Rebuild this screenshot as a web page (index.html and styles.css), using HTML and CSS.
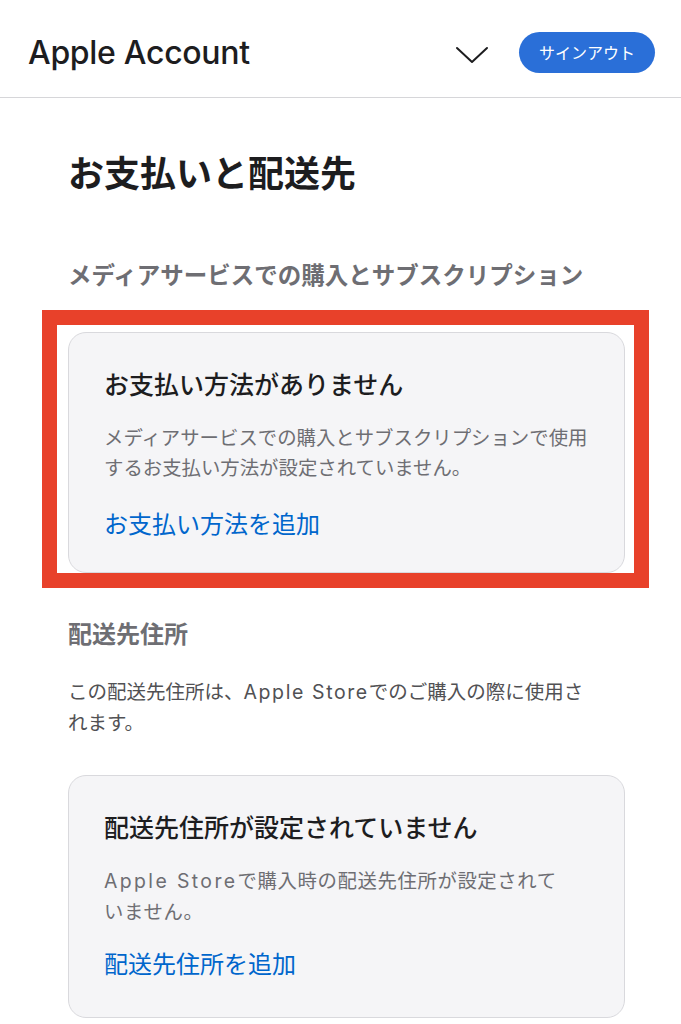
FILE: index.html
```html
<!DOCTYPE html>
<html lang="ja">
<head>
<meta charset="utf-8">
<title>Apple Account</title>
<link rel="stylesheet" href="styles.css">
</head>
<body>
<header class="topbar">
  <div class="brand">Apple Account</div>
  <div class="actions">
    <svg class="chevron" width="34" height="20" viewBox="0 0 34 20" aria-hidden="true">
      <path d="M2 3 L17 17 L32 3" fill="none" stroke="#1d1d1f" stroke-width="2" stroke-linecap="round" stroke-linejoin="round"/>
    </svg>
    <button class="signout">サインアウト</button>
  </div>
</header>
<main class="content">
  <h1 class="page-title">お支払いと配送先</h1>
  <section class="section">
    <h2 class="section-title">メディアサービスでの購入とサブスクリプション</h2>
    <div class="card">
      <h3 class="card-title">お支払い方法がありません</h3>
      <p class="card-text">メディアサービスでの購入とサブスクリプションで使用<br>するお支払い方法が設定されていません。</p>
      <a class="card-link" href="#">お支払い方法を追加</a>
    </div>
  </section>
  <section class="section section-ship">
    <h2 class="section-title">配送先住所</h2>
    <p class="section-text">この配送先住所は、<span class="latin">Apple Store</span>でのご購入の際に使用さ<br>れます。</p>
    <div class="card card-ship">
      <h3 class="card-title">配送先住所が設定されていません</h3>
      <p class="card-text"><span class="latin">Apple Store</span>で購入時の配送先住所が設定されて<br>いません。</p>
      <a class="card-link" href="#">配送先住所を追加</a>
    </div>
  </section>
  <div class="highlight" aria-hidden="true"></div>
</main>
</body>
</html>
```

FILE: styles.css
```css
* { box-sizing: border-box; }
html, body { margin: 0; padding: 0; background: #ffffff; }
body {
  font-family: "Noto Sans CJK JP", "Noto Sans", sans-serif;
  color: #1d1d1f;
  width: 681px;
  overflow: hidden;
}
.topbar {
  height: 98px;
  border-bottom: 1px solid #d6d6d9;
  display: flex;
  align-items: center;
  justify-content: space-between;
  padding: 8px 26px 0 28px;
}
.brand {
  font-family: Inter, "Liberation Sans", sans-serif;
  font-size: 32px;
  font-weight: 500;
  letter-spacing: -0.3px;
  color: #1d1d1f;
}
.actions {
  display: flex;
  align-items: center;
  gap: 30px;
}
.chevron { display: block; margin-top: 4px; }
.signout {
  font-family: "Noto Sans CJK JP", sans-serif;
  font-size: 16px;
  color: #ffffff;
  background: #2a6fd8;
  border: none;
  border-radius: 21px;
  height: 41px;
  padding: 0 20px;
  line-height: 41px;
}
.content {
  position: relative;
  padding: 51px 56px 0 68px;
}
.page-title {
  margin: 0;
  font-size: 36px;
  line-height: 44px;
  font-weight: 700;
  color: #1d1d1f;
}
.section { margin-top: 65px; }
.section-ship { margin-top: 44px; }
.section-title {
  margin: 0 0 42px;
  font-size: 23.5px;
  line-height: 32px;
  font-weight: 700;
  color: #6e6e73;
}
.section-ship .section-title { margin-bottom: 27px; font-size: 24px; }
.section-text {
  margin: 0 0 38px;
  font-size: 19.5px;
  line-height: 30px;
  color: #515154;
  white-space: nowrap;
}
.latin {
  font-family: Inter, "Liberation Sans", sans-serif;
  letter-spacing: 1.6px;
}
.card {
  background: #f5f5f7;
  border: 1px solid #d9d9dd;
  border-radius: 18px;
  padding: 33px 30px 33px 35px;
}
.card-ship { padding-bottom: 38px; }
.card-ship .card-link { margin-top: 21px; }
.card-ship .latin { letter-spacing: 2.4px; }
.card-ship .card-text { letter-spacing: 0.6px; }
.card-title {
  margin: 0;
  font-size: 25px;
  line-height: 34px;
  font-weight: 500;
  color: #1d1d1f;
}
.card-text {
  margin: 22px 0 0;
  font-size: 19.4px;
  line-height: 30px;
  color: #6e6e73;
  white-space: nowrap;
}
.card-link {
  display: block;
  margin-top: 25px;
  font-size: 24px;
  line-height: 32px;
  color: #0066cc;
  text-decoration: none;
}
.highlight {
  position: absolute;
  left: 42px;
  top: 212px;
  width: 607px;
  height: 278px;
  border: 15px solid #e8412a;
  pointer-events: none;
}
```
